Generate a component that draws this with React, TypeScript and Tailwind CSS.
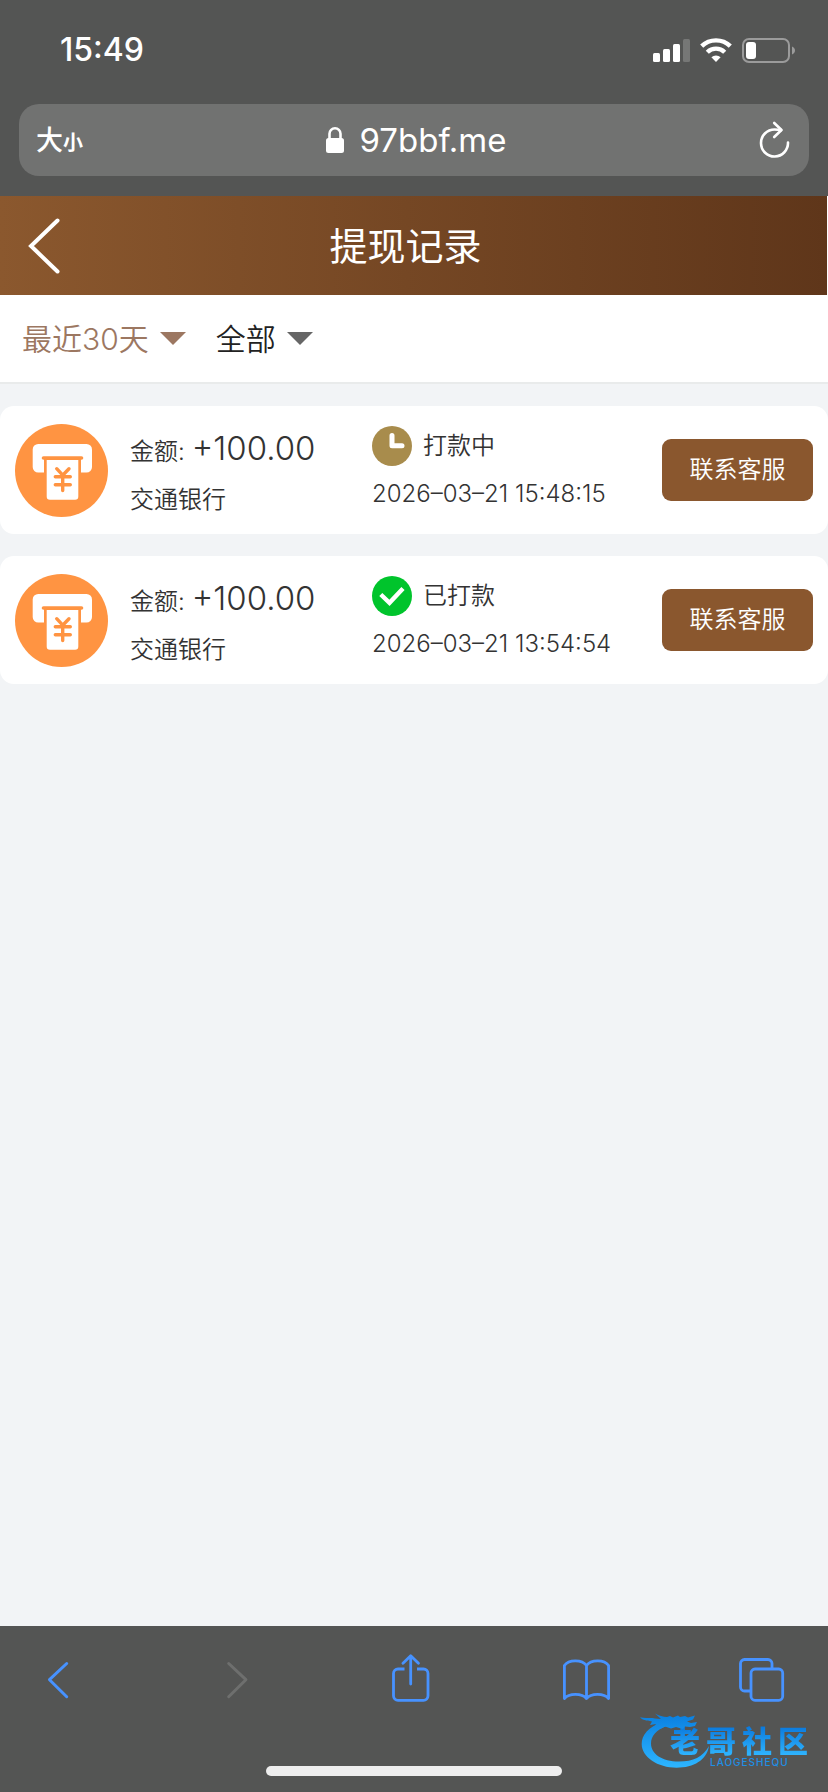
import { useState } from "react";

type Status = "pending" | "paid";

type WithdrawRecord = {
  id: number;
  amount: string;
  bank: string;
  status: Status;
  time: string;
};

const records: WithdrawRecord[] = [
  { id: 1, amount: "+100.00", bank: "交通银行", status: "pending", time: "2026–03–21 15:48:15" },
  { id: 2, amount: "+100.00", bank: "交通银行", status: "paid", time: "2026–03–21 13:54:54" },
];

const statusLabels: Record<Status, string> = {
  pending: "打款中",
  paid: "已打款",
};

function StatusBar() {
  return (
    <div className="flex h-[100px] items-center justify-between pr-[33px] pl-[60px]">
      <span className="text-[32px] leading-10 font-medium">15:49</span>
      <div className="flex items-center gap-[10px]">
        <svg width="37" height="24" viewBox="0 0 37 24" fill="currentColor" aria-hidden="true">
          <rect x="0" y="15" width="7" height="9" rx="1.5" />
          <rect x="10" y="11" width="7" height="13" rx="1.5" />
          <rect x="20" y="6" width="7" height="18" rx="1.5" />
          <rect x="30" y="1" width="7" height="23" rx="1.5" opacity="0.2" />
        </svg>
        <svg width="32" height="24" viewBox="0 0 32 24" fill="none" stroke="currentColor" aria-hidden="true">
          <path d="M1.7 8.2a20.5 20.5 0 0 1 28.6 0" strokeWidth="4.4" />
          <path d="M7.3 14.2a12.4 12.4 0 0 1 17.4 0" strokeWidth="4.4" />
          <path d="M16 24l-4.6-4.7a6.6 6.6 0 0 1 9.2 0z" fill="currentColor" stroke="none" />
        </svg>
        <svg width="53" height="25" viewBox="0 0 53 25" fill="none" aria-hidden="true">
          <rect x="1" y="1" width="46" height="23" rx="6" stroke="#9b9b9b" strokeWidth="2" />
          <rect x="4" y="4" width="10" height="17" rx="3" fill="white" />
          <path d="M50 8.5c4 1.5 4 6.5 0 8z" fill="#9b9b9b" />
        </svg>
      </div>
    </div>
  );
}

function AddressBar() {
  return (
    <div className="mx-[19px] mt-1 grid h-[72px] grid-cols-[80px_1fr_80px] items-center rounded-[20px] bg-[#717271]">
      <button type="button" className="flex items-baseline pt-1 pl-[17px]">
        <span className="text-[27px] leading-8 font-medium">大</span>
        <span className="text-[20px] leading-8 font-bold">小</span>
      </button>
      <div className="flex items-center justify-center gap-4 pl-1">
        <svg width="18" height="26" viewBox="0 0 18 26" aria-hidden="true">
          <rect x="0" y="11" width="18" height="15" rx="2.5" fill="white" />
          <path d="M3.5 12V6.800a5.500 5.500 0 0 1 11 0V12" fill="none" stroke="white" strokeWidth="2.6" />
        </svg>
        <span className="text-[33px] leading-10">97bbf.me</span>
      </div>
      <button type="button" aria-label="刷新" className="justify-self-end pr-[19px]">
        <svg width="31" height="38" viewBox="0 0 31 38" fill="none" stroke="white" strokeWidth="2.6" strokeLinecap="round" strokeLinejoin="round">
          <path d="M29 21.500A13.500 13.500 0 1 1 15.500 8.500c2.500 0 4.500.1 6.500.6" />
          <path d="M15.200 2l7.300 7-7.300 7" />
        </svg>
      </button>
    </div>
  );
}

function Filter({ label, options, muted }: { label: string; options: string[]; muted?: boolean }) {
  const [value, setValue] = useState(options[0]);

  return (
    <label className={`flex items-center gap-[11px] ${muted ? "text-[#9c7761]" : "text-[#222]"}`}>
      <select
        aria-label={label}
        value={value}
        onChange={(e) => setValue(e.target.value)}
        className="field-sizing-content appearance-none bg-transparent text-[30px] leading-10 focus:outline-none"
      >
        {options.map((o) => (
          <option key={o}>{o}</option>
        ))}
      </select>
      <svg width="26" height="13" viewBox="0 0 26 13" aria-hidden="true" className={muted ? "text-[#9c7761]" : "text-[#666]"}>
        <path d="M0 0h26L13 13z" fill="currentColor" />
      </svg>
    </label>
  );
}

function WithdrawIcon() {
  return (
    <svg width="93" height="93" viewBox="0 0 93 93" aria-hidden="true" className="shrink-0">
      <circle cx="46.5" cy="46.5" r="46.5" fill="#ff9442" />
      <rect x="17.7" y="20" width="59.3" height="28.5" rx="5.5" fill="white" />
      <path d="M29 34h37v16H29z" fill="#ff9442" />
      <path d="M28.5 34h38" stroke="#ff9442" strokeWidth="3.6" strokeLinecap="round" />
      <path d="M31.7 36h31.6v36.500a3.200 3.200 0 0 1-3.200 3.200H34.900a3.200 3.200 0 0 1-3.200-3.200z" fill="white" />
      <path
        d="M41.7 44.7l6 6.500 6.300-6.500M40.300 52.700h15M40.300 60.700h15M47.700 51.500v15"
        fill="none"
        stroke="#ff9442"
        strokeWidth="3.4"
        strokeLinecap="round"
        strokeLinejoin="round"
      />
    </svg>
  );
}

function StatusIcon({ status }: { status: Status }) {
  if (status === "paid") {
    return (
      <svg width="40" height="40" viewBox="0 0 40 40" aria-hidden="true">
        <circle cx="20" cy="20" r="20" fill="#00c42c" />
        <path d="M8.800 18.500l8.700 8.300L31 12.500" fill="none" stroke="white" strokeWidth="4.4" />
      </svg>
    );
  }

  return (
    <svg width="40" height="40" viewBox="0 0 40 40" aria-hidden="true">
      <circle cx="20" cy="20" r="20" fill="#a88c4c" />
      <path d="M20 9.500v10.300h10" fill="none" stroke="white" strokeWidth="5" strokeLinecap="round" strokeLinejoin="round" />
    </svg>
  );
}

function RecordCard({ record }: { record: WithdrawRecord }) {
  return (
    <li className="flex h-32 items-center rounded-[14px] bg-white px-[15px] text-[24px] text-[#333]">
      <WithdrawIcon />
      <div className="ml-[22px] flex w-[242px] flex-col gap-1 pt-2">
        <p className="flex items-baseline gap-[7px] leading-[44px]">
          <span>金额:</span>
          <span className="text-[33px]">{record.amount}</span>
        </p>
        <p className="leading-[44px]">{record.bank}</p>
      </div>
      <div className="flex flex-1 flex-col gap-2 whitespace-nowrap">
        <p className="flex items-center gap-[11px] leading-10">
          <StatusIcon status={record.status} />
          {statusLabels[record.status]}
        </p>
        <time className="leading-10">{record.time}</time>
      </div>
      <button type="button" className="h-[62px] w-[151px] shrink-0 rounded-[9px] bg-[#8a572e] text-white">
        联系客服
      </button>
    </li>
  );
}

function BrowserNav() {
  return (
    <nav className="flex justify-between pt-7 pr-10 pl-8 text-[#4792ff]">
      <button type="button" aria-label="后退">
        <svg width="52" height="52" viewBox="0 0 52 52" fill="none" stroke="currentColor" strokeWidth="3" strokeLinecap="round" strokeLinejoin="round">
          <path d="M34.700 9.500L17.500 25.700l17.200 17" />
        </svg>
      </button>
      <button type="button" aria-label="前进" disabled className="text-[#6e6f6e]">
        <svg width="52" height="52" viewBox="0 0 52 52" fill="none" stroke="currentColor" strokeWidth="3" strokeLinecap="round" strokeLinejoin="round">
          <path d="M20.700 9.500l17.200 16.200-17.200 17" />
        </svg>
      </button>
      <button type="button" aria-label="分享">
        <svg width="52" height="52" viewBox="0 0 52 52" fill="none" stroke="currentColor" strokeWidth="2.8" strokeLinejoin="round">
          <path d="M20.500 15H14a4.500 4.500 0 0 0-4.500 4.500v22.300a4.500 4.500 0 0 0 4.500 4.500h25.500a4.500 4.500 0 0 0 4.500-4.500V19.500a4.500 4.500 0 0 0-4.500-4.500H33" />
          <path d="M26.700 2v28M19 9.300L26.700 1.700l7.700 7.600" strokeLinecap="round" />
        </svg>
      </button>
      <button type="button" aria-label="书签">
        <svg width="52" height="52" viewBox="0 0 52 52" fill="none" stroke="currentColor" strokeWidth="2.8" strokeLinejoin="round">
          <path d="M26.500 11.500C22 5.500 9 5 4.400 11.500v33C9 39 22 39 26.500 44.500 31 39 44 39 48.600 44.500v-33C44 5 31 5.500 26.500 11.500zv33" />
        </svg>
      </button>
      <button type="button" aria-label="标签页">
        <svg width="52" height="52" viewBox="0 0 52 52" fill="none" stroke="currentColor" strokeWidth="2.8">
          <path d="M36 15V9.500a4 4 0 0 0-4-4H8.500a4 4 0 0 0-4 4V33a4 4 0 0 0 4 4H15" />
          <rect x="15" y="15" width="31.7" height="31.3" rx="4" />
        </svg>
      </button>
    </nav>
  );
}

function Watermark() {
  return (
    <div className="pointer-events-none absolute right-[14px] bottom-5 flex h-16 w-[176px] items-end pb-1">
      <svg width="80" height="62" viewBox="0 0 80 62" aria-hidden="true" className="absolute top-0 left-0">
        <defs>
          <linearGradient id="dragon" gradientUnits="userSpaceOnUse" x1="0" y1="6" x2="0" y2="58">
            <stop offset="0" stopColor="#0a7fe0" />
            <stop offset="1" stopColor="#2cb4ff" />
          </linearGradient>
        </defs>
        <g fill="url(#dragon)">
          <path d="M25 14C10 19 3.700 27 3.700 36c0 13 16 23.700 35 23.700 17 0 30-7.700 32.300-21.700-6 11-16 15.500-30 15.500-17 0-28-7.500-28-18C13 28 18 22 29 18z" />
          <path d="M2 9.300c5 1.500 10 0 15 1.200l6 .5-6-5.500c4 2 8 3.500 12 3.500l3-1 3 1.500 5-2 2 1.500 5-1 3 1.500 7-2-2 4-6 2 4 1.500 6-1-2 4-5 1-5-.5-2 2.500-7-2-5 1.500-6-2-5 2.500 1-3-8 2 3-4-6 1 2-3.500C12 13 5 13 2 9.300z" />
        </g>
      </svg>
      <div className="ml-8">
        <div className="flex gap-[6px] bg-linear-to-b from-[#0a78dc] to-[#30b6ff] bg-clip-text text-[30px] leading-[30px] font-black text-transparent">
          <span>老</span>
          <span>哥</span>
          <span>社</span>
          <span>区</span>
        </div>
        <p className="ml-10 text-[10px] leading-3 font-medium tracking-widest text-[#1f8fe6]">LAOGESHEQU</p>
      </div>
    </div>
  );
}

export default function App() {
  return (
    <div className="flex min-h-screen flex-col bg-[#f2f4f6] font-['Inter','Noto_Sans_CJK_SC',sans-serif]">
      <header className="bg-[#545554] pb-5 text-white">
        <StatusBar />
        <AddressBar />
      </header>

      <div className="bg-white pr-px">
        <div className="grid h-[99px] grid-cols-[64px_1fr_80px] items-center bg-linear-to-r from-[#8b582e] to-[#5f361a] text-white">
          <button type="button" aria-label="返回" className="pl-7">
            <svg width="32" height="56" viewBox="0 0 32 56" fill="none" stroke="white" strokeWidth="4" strokeLinecap="round">
              <path d="M29.500 2.500L3 28l26.500 25.500" />
            </svg>
          </button>
          <h1 className="text-center text-[38px] leading-[52px] font-normal">提现记录</h1>
        </div>
      </div>

      <div className="flex h-[89px] items-center gap-[30px] border-b-2 border-[#e9ebeb] bg-white px-[22px] font-[350]">
        <Filter label="时间" options={["最近30天", "最近7天", "今天"]} muted />
        <Filter label="状态" options={["全部", "打款中", "已打款"]} />
      </div>

      <main className="flex-1 pt-[22px] font-[350]">
        <ul className="flex flex-col gap-[22px]">
          {records.map((record) => (
            <RecordCard key={record.id} record={record} />
          ))}
        </ul>
      </main>

      <footer className="relative bg-[#545554]">
        <BrowserNav />
        <div className="mx-auto mt-[60px] mb-4 h-[10px] w-[296px] rounded-full bg-[#eee]" />
        <Watermark />
      </footer>
    </div>
  );
}
